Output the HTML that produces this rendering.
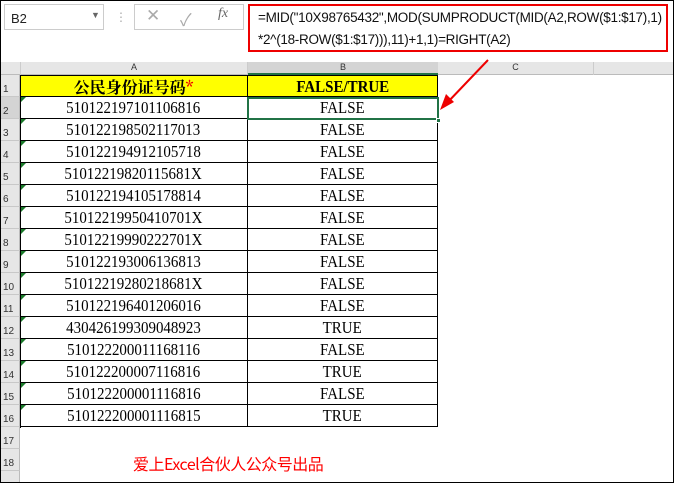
<!DOCTYPE html><html><head><meta charset="utf-8"><style>
*{margin:0;padding:0;box-sizing:border-box}
body{width:674px;height:483px;overflow:hidden;background:#fff;font-family:"Liberation Sans","Noto Sans CJK SC",sans-serif;position:relative}
.a{position:absolute}
.row{position:absolute;left:0;width:674px;height:22px}
.rh{position:absolute;left:1px;width:19px;height:22px;background:#e6e6e6;border-bottom:1px solid #c8c8c8;border-right:1px solid #bbb;font-size:10px;color:#333;padding-top:9px;padding-left:2px}
.ca,.cb{position:absolute;top:0;height:22px;border-right:1px solid #000;border-bottom:1px solid #000;text-align:center;font-family:"Liberation Serif","Noto Serif CJK SC",serif;font-size:17px;line-height:22px;white-space:nowrap}
.ca{left:20px;width:228px}.cb{left:248px;width:190px}
.tri{position:absolute;left:21px;top:0;width:0;height:0;border-top:5px solid #1a7a2a;border-right:5px solid transparent}
.n{display:inline-block;transform:scaleX(.88)}
</style></head><body>
<div class="a" style="left:0;top:0;width:674px;height:483px;border:1px solid #000;z-index:10;pointer-events:none"></div>
<div class="a" style="left:1px;top:1px;width:672px;height:61px;background:#fff"></div>
<div class="a" style="left:4px;top:4px;width:100px;height:26px;border:1px solid #ccc;font-size:13px;padding:6px 0 0 6px;color:#222">B2<span style="position:absolute;left:86px;top:5px;font-size:9px;color:#666">▼</span></div>
<div class="a" style="left:115px;top:10px;color:#aaa;font-size:12px">⋮</div>
<div class="a" style="left:134px;top:4px;width:110px;height:26px;border:1px solid #ccc"></div>
<div class="a" style="left:146px;top:6px;color:#aaa;font-size:17px">✕</div>
<div class="a" style="left:180px;top:6px;color:#aaa;font-size:17px">✓</div>
<div class="a" style="left:218px;top:6px;color:#666;font-size:14px;font-style:italic;font-family:'Liberation Serif',serif">fx</div>
<div class="a" style="left:248px;top:4px;width:420px;height:48px;border:2px solid #e00"></div>
<div class="a" style="left:258px;top:7px;font-size:13.5px;color:#111;line-height:22px;letter-spacing:-0.3px;white-space:nowrap">=MID("10X98765432",MOD(SUMPRODUCT(MID(A2,ROW($1:$17),1)<br>*2^(18-ROW($1:$17))),11)+1,1)=RIGHT(A2)</div>
<div class="a" style="left:1px;top:62px;width:672px;height:13px;background:#e6e6e6;border-bottom:1px solid #bbb"></div>
<div class="a" style="left:20px;top:62px;width:228px;height:13px;border-left:1px solid #ccc;border-right:1px solid #ccc;font-size:9px;text-align:center;color:#333">A</div>
<div class="a" style="left:248px;top:62px;width:190px;height:13px;background:#d4d4d4;border-bottom:2px solid #217346;font-size:9px;text-align:center;color:#333">B</div>
<div class="a" style="left:438px;top:62px;width:156px;height:13px;border-right:1px solid #ccc;font-size:9px;text-align:center;color:#333">C</div>
<div class="row" style="top:75px"><div class="rh">1</div><div class="ca" style="background:#ff0;font-weight:bold;font-family:'Noto Serif CJK SC',serif;font-size:16px;border-top:1px solid #000">公民身份证号码<span style="color:#e00">*</span></div><div class="cb" style="background:#ff0;font-weight:bold;border-top:1px solid #000"><span class="n">FALSE/TRUE</span></div></div>
<div class="row" style="top:97px"><div class="rh" style="background:#d4d4d4">2</div><div class="ca"><span class="n">510122197101106816</span></div><div class="cb"><span class="n">FALSE</span></div><div class="tri"></div></div>
<div class="row" style="top:119px"><div class="rh">3</div><div class="ca"><span class="n">510122198502117013</span></div><div class="cb"><span class="n">FALSE</span></div><div class="tri"></div></div>
<div class="row" style="top:141px"><div class="rh">4</div><div class="ca"><span class="n">510122194912105718</span></div><div class="cb"><span class="n">FALSE</span></div><div class="tri"></div></div>
<div class="row" style="top:163px"><div class="rh">5</div><div class="ca"><span class="n">51012219820115681X</span></div><div class="cb"><span class="n">FALSE</span></div><div class="tri"></div></div>
<div class="row" style="top:185px"><div class="rh">6</div><div class="ca"><span class="n">510122194105178814</span></div><div class="cb"><span class="n">FALSE</span></div><div class="tri"></div></div>
<div class="row" style="top:207px"><div class="rh">7</div><div class="ca"><span class="n">51012219950410701X</span></div><div class="cb"><span class="n">FALSE</span></div><div class="tri"></div></div>
<div class="row" style="top:229px"><div class="rh">8</div><div class="ca"><span class="n">51012219990222701X</span></div><div class="cb"><span class="n">FALSE</span></div><div class="tri"></div></div>
<div class="row" style="top:251px"><div class="rh">9</div><div class="ca"><span class="n">510122193006136813</span></div><div class="cb"><span class="n">FALSE</span></div><div class="tri"></div></div>
<div class="row" style="top:273px"><div class="rh">10</div><div class="ca"><span class="n">51012219280218681X</span></div><div class="cb"><span class="n">FALSE</span></div><div class="tri"></div></div>
<div class="row" style="top:295px"><div class="rh">11</div><div class="ca"><span class="n">510122196401206016</span></div><div class="cb"><span class="n">FALSE</span></div><div class="tri"></div></div>
<div class="row" style="top:317px"><div class="rh">12</div><div class="ca"><span class="n">430426199309048923</span></div><div class="cb"><span class="n">TRUE</span></div><div class="tri"></div></div>
<div class="row" style="top:339px"><div class="rh">13</div><div class="ca"><span class="n">510122200011168116</span></div><div class="cb"><span class="n">FALSE</span></div><div class="tri"></div></div>
<div class="row" style="top:361px"><div class="rh">14</div><div class="ca"><span class="n">510122200007116816</span></div><div class="cb"><span class="n">TRUE</span></div><div class="tri"></div></div>
<div class="row" style="top:383px"><div class="rh">15</div><div class="ca"><span class="n">510122200001116816</span></div><div class="cb"><span class="n">FALSE</span></div><div class="tri"></div></div>
<div class="row" style="top:405px"><div class="rh">16</div><div class="ca"><span class="n">510122200001116815</span></div><div class="cb"><span class="n">TRUE</span></div><div class="tri"></div></div>
<div class="row" style="top:427px"><div class="rh">17</div></div>
<div class="row" style="top:449px"><div class="rh">18</div></div>
<div class="row" style="top:471px;height:12px"><div class="rh" style="height:12px"></div></div>
<div class="a" style="left:20px;top:75px;width:1px;height:353px;background:#000"></div>
<div class="a" style="left:247px;top:97px;width:192px;height:23px;border:2px solid #217346"></div>
<div class="a" style="left:436px;top:118px;width:5px;height:5px;background:#217346;border:1px solid #fff"></div>
<div class="a" style="left:133px;top:451px;color:#f00;font-size:16px;letter-spacing:-0.5px;font-family:'Noto Sans CJK SC',sans-serif">爱上Excel合伙人公众号出品</div>
<svg class="a" style="left:438px;top:56px" width="60" height="56"><line x1="50" y1="4" x2="8" y2="48" stroke="#e00" stroke-width="2"/><polygon points="2,54 8,38 16,46" fill="#e00"/></svg>
</body></html>
